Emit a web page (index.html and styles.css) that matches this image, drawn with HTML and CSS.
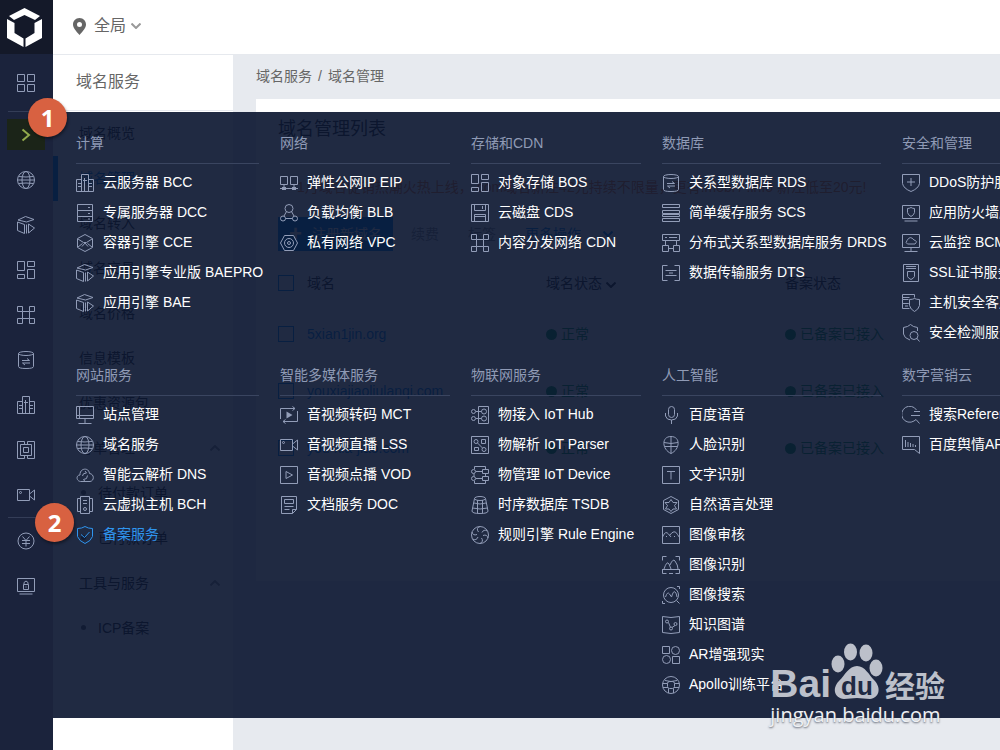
FILE: index.html
```html
<!DOCTYPE html>
<html lang="zh-CN">
<head>
    <meta charset="UTF-8">
    <meta name="viewport" content="width=device-width, initial-scale=1.0">
    <title>域名管理</title>
    <link rel="stylesheet" href="styles.css">
</head>
<body>
    <!-- icon sprite, 18x18 grid -->
    <svg class="sprite" aria-hidden="true">
        <symbol id="grid" viewBox="0 0 18 18"><path d="M.5.5h7v7h-7zM10.5.5h7v7h-7zM.5 10.5h7v7h-7zM10.5 10.5h7v7h-7z"/></symbol>
        <symbol id="globe" viewBox="0 0 18 18"><circle cx="9" cy="9" r="8.5"/><ellipse cx="9" cy="9" rx="4" ry="8.5"/><path d="M1.5 5.5q7.500 1 15 0M1.500 12.500q7.500-1 15 0M.5 9h17"/></symbol>
        <symbol id="box" viewBox="0 0 18 18"><path d="M1 4L8.500.5 17 3.500 9.500 6zM.5 6L7.500 8.500v9L.5 14.500zM9.500 8.500v9M11.500 8l6 4-6 5z"/></symbol>
        <symbol id="bos" viewBox="0 0 18 18"><path d="M.5.5h7v9h-7zM10.500.5h7v5h-7zM.5 13.500h7v4h-7zM10.500 8.500h7v9h-7z"/></symbol>
        <symbol id="cdn" viewBox="0 0 18 18"><path d="M.5.5h5v5h-5zM12.500.5h5v5h-5zM.5 12.500h5v5h-5zM12.500 12.500h5v5h-5zM5.500 5.500h7v7h-7z"/></symbol>
        <symbol id="rds" viewBox="0 0 18 18"><ellipse cx="9" cy="2.500" rx="7.500" ry="2"/><path d="M1.500 2.500v13q0 2 7.500 2t7.500-2v-13M5 9.500h7.500l-2.500-2M13 12H5.500l2.500 2"/></symbol>
        <symbol id="bcc" viewBox="0 0 18 18"><path d="M5.500 17.500V.5h7v17M5.500 5.500h-5v12h17v-12h-5M8.500 4v13M2 9.500h3M2 12.500h3M7 6.500h4M13 9.500h3M13 12.500h3"/></symbol>
        <symbol id="chip" viewBox="0 0 18 18"><path d="M7.500 3.500v-3h-7v17h7v-3M10.500 3.500v-3h7v17h-7v-3M3.500 3.500h11v11h-11zM6.500 6.500h5v5h-5z"/></symbol>
        <symbol id="video" viewBox="0 0 18 18"><path d="M.5 3.500h12v11H.5zM12.500 8l5-4v10l-5-4"/><circle cx="3.500" cy="6.500" r="1"/></symbol>
        <symbol id="yuan" viewBox="0 0 18 18"><circle cx="9" cy="9" r="8"/><path d="M5.500 4.500L9 8.500l3.500-4M9 8.500v6M5 8.500h8M5 11.500h8"/></symbol>
        <symbol id="lock" viewBox="0 0 18 18"><path d="M.5 1.500h17v13H.5zM2.500 17h13M6.500 7.500h5v5h-5zM7 7.500v-2q2-3 4 0v2M9 9.500v1"/></symbol>
        <symbol id="dcc" viewBox="0 0 18 18"><path d="M1.500.5h15v17h-15zM1.500 6.500h15M1.500 12.500h15M12 3.500h2M12 9.500h2M12 15h2"/></symbol>
        <symbol id="cce" viewBox="0 0 18 18"><path d="M9 .5l7.500 4v9L9 17.500l-7.500-4v-9zM2 5l5.500 3.500h3L16 5M2 13l4.500-3.500M16 13l-4.500-3.500M6 12.500L9 9l3 3.500"/></symbol>
        <symbol id="eip" viewBox="0 0 18 18"><path d="M.5 2.500h7v8h-7zM10.500 2.500h7v8h-7zM4 10.500v4M14 10.500v4M0 14.500h18"/><path class="solid" d="M2 13h4v3H2zM12 13h4v3h-4z"/></symbol>
        <symbol id="blb" viewBox="0 0 18 18"><circle cx="9" cy="4.500" r="4"/><circle cx="3" cy="14.500" r="2.500"/><circle cx="15" cy="14.500" r="2.500"/><path d="M6.500 7.500L4 12M11.500 7.500L14 12M5.500 14.500h7"/></symbol>
        <symbol id="vpc" viewBox="0 0 18 18"><path d="M4.500 1.500h9l4 7.500-4 7.500h-9L.5 9z"/><circle cx="9" cy="9" r="4.500"/><circle cx="9" cy="9" r="1.500"/></symbol>
        <symbol id="disk" viewBox="0 0 18 18"><path d="M.5.5h17v17H.5zM3.500.5v6h11v-6M3.500 17.500v-7h11v7M11.500 2v3M4 12.500h10"/></symbol>
        <symbol id="scs" viewBox="0 0 18 18"><path d="M.5.5h17v3H.5zM.5 6.500h17v3H.5zM.5 10.500h17v2H.5zM.5 14.500h17v3H.5z"/></symbol>
        <symbol id="drds" viewBox="0 0 18 18"><path d="M.5.5h17v6H.5zM.5 11.500h6v6h-6zM11.500 11.500h6v6h-6zM3.500 11.500v-5M14.500 11.500v-5M3 3.500h2M7 3.500h8M6.500 14.500h5"/></symbol>
        <symbol id="dts" viewBox="0 0 18 18"><path d="M5.500 1.500h-5v15h5M12.500 1.500h5v15h-5M3.500 6.500h11M3.500 11.500h11M7 9h4"/></symbol>
        <symbol id="ddos" viewBox="0 0 18 18"><path d="M.5.500h17v9q-1 5-8.500 8-7.500-3-8.500-8zM9 4v8M5 8h8"/></symbol>
        <symbol id="waf" viewBox="0 0 18 18"><path d="M.5 1.500h17v13H.5zM2.500 17h13M5.500 4.500q2 0 3.500-1 1.500 1 3.500 1v4Q12 11 9 12.500 6 11 5.500 8.500z"/></symbol>
        <symbol id="bcm" viewBox="0 0 18 18"><path d="M.5.5h17v13H.5zM2.500 17.500h13M9 13.500v4M5.500 10q-2.500-1-.5-3.500 3-5.500 7-.5 4 1 1 4z"/></symbol>
        <symbol id="ssl" viewBox="0 0 18 18"><path d="M1.500.5h15v17h-15zM4 2.500h10M4 4.500h10M5.500 7.500h7v5q-1 2-3.500 3-2.500-1-3.500-3z"/></symbol>
        <symbol id="host" viewBox="0 0 18 18"><path d="M7.500 14.500h-7v-5h6M6.500 9.500h-6v-4h6M.5 5.500v-5h12v3M.5 3.500h7M3 12h3M7.500 5.500q3 0 5-1 2 1 5 1v6q-1 4-5 6-4-2-5-6z"/></symbol>
        <symbol id="scan" viewBox="0 0 18 18"><path d="M8 16q-6-2-6.500-6V3.500Q6 3 8.500.5 11 3 15.500 3.500V7"/><circle cx="12" cy="11.500" r="4"/><path d="M14.500 14l3 3.500"/></symbol>
        <symbol id="site" viewBox="0 0 18 18"><path d="M.5.5h17v12H.5zM3.500.5v12M.5 9.500h17M9 12.500v5M2.500 17.500h13"/></symbol>
        <symbol id="dns" viewBox="0 0 18 18"><path d="M4.500 15.500C0 15 0 9 4 9 3.500 2 13 1 13.500 7.500c5 .5 5 7.500.5 8zM6.500 10q0-3 4-3l-1.500-2M11.500 9.500q0 4-4 4l1.500 2"/></symbol>
        <symbol id="bch" viewBox="0 0 18 18"><path d="M4.500.5h9v17h-9zM4.500 2.500h-3v13h3M13.500 2.500h3v13h-3M7 4.500h4M7 7.500h4"/><circle cx="9" cy="13" r="1.500"/></symbol>
        <symbol id="icp" viewBox="0 0 18 18"><path d="M9 .5q3 2 7.500 2v8Q15 15 9 17.500 3 15 1.500 10.500v-8q4.500 0 7.500-2zM5 8.500l3.500 3 5-5.500"/></symbol>
        <symbol id="mct" viewBox="0 0 18 18"><path d="M.5 13V2.500H15M12.500.5L15 2.500l-2.500 2M17.500 5v10.500H3M5.500 13.500L3 15.500l2.500 2"/><path class="solid" d="M6.500 5.500l6 3.500-6 3.500z"/></symbol>
        <symbol id="vod" viewBox="0 0 18 18"><path d="M.5.5h17v17H.5zM6 5.500L12.500 9 6 12.500z"/></symbol>
        <symbol id="doc" viewBox="0 0 18 18"><path d="M12.500 17.500h-11V.5h15v13zM12.500 17.500v-4h4M4.500 3.500h9v4h-9zM4.500 10.500h9M4.500 13.500h5"/></symbol>
        <symbol id="hub" viewBox="0 0 18 18"><path d="M7.500.5h10v17h-10zM5 5.500h5.500M5 12.500h5.500"/><circle cx="2.500" cy="5.500" r="2"/><circle cx="2.500" cy="12.500" r="2"/><circle cx="13" cy="5.500" r="2.500"/><circle cx="13" cy="12.500" r="2.500"/></symbol>
        <symbol id="parser" viewBox="0 0 18 18"><path d="M.5.5h17v17H.5zM10.500 3.500h4v4h-4zM3.500 11.500h4v3h-4zM6.500 7l5 5"/><circle cx="5" cy="5.500" r="2"/><circle cx="13" cy="13.500" r="2"/></symbol>
        <symbol id="device" viewBox="0 0 18 18"><path d="M3.500 3V.5h11v3M3.500 15v2.500h11v-3M11.500 3.500h6v4h-6zM11.500 10.500h6v4h-6zM5 5.500h6.500M5 12.500h6.500M3 7.500v3M14.500 7.500v3"/><circle cx="2.500" cy="5.500" r="2"/><circle cx="2.500" cy="12.500" r="2"/></symbol>
        <symbol id="tsdb" viewBox="0 0 18 18"><ellipse cx="9" cy="2.500" rx="5.500" ry="2"/><path d="M3.500 2.500L1 15q0 2.500 8 2.500t8-2.500L14.500 2.500M3 7q6 2 12 0M1.500 12q7.500 2 15 0M6.500 4v13M11.500 4v13"/></symbol>
        <symbol id="rule" viewBox="0 0 18 18"><circle cx="9" cy="9" r="8.500"/><path d="M9 .5Q4.500 2 7.500 6M16.500 5q-4-2-5.500 1.500M17 12q-1-4-5-2.500M9 17.500q4-2 1.500-5.500M1.500 13q4 2 5.500-2M1 6q1 4 5 2.500"/></symbol>
        <symbol id="mic" viewBox="0 0 18 18"><rect x="6.500" y=".5" width="6" height="11" rx="3"/><path d="M3.500 7v3q1 4 6 4t6-4V7M9.500 14v4"/></symbol>
        <symbol id="face" viewBox="0 0 18 18"><path d="M9 .5c10 0 9 13 0 17C0 13.500-1 .5 9 .5zM9 .5v17M2 6.500q7 2 14 0M2.500 10.500h13"/></symbol>
        <symbol id="ocr" viewBox="0 0 18 18"><path d="M.5.5h17v17H.5zM5 5.500h8M9 5.500v8"/></symbol>
        <symbol id="nlp" viewBox="0 0 18 18"><path d="M9 .5l7.500 4v9L9 17.500l-7.500-4v-9zM9 3.500l2 3h4L12.500 9.500l2 3.500H11L9 15.500 7 13H3.500l2-3.500L3 6.500h4z"/></symbol>
        <symbol id="audit" viewBox="0 0 18 18"><path d="M.5.500h17v17H.5zM.5 11q3-7 6-3l2.500 3M7.500 9.500q5-7 8-1l2 3"/><path d="M4 10.500h1M12 10.500h1"/></symbol>
        <symbol id="detect" viewBox="0 0 18 18"><path d="M4.500.5h-4v4M13.500.5h4v4M.5 14v3.500h4M17.500 14v3.500h-4M0 13.500h18M2 13q3-9 5-5l2 5M8 9q3-7 5-4 3 4 3 8M7 17.500h4"/></symbol>
        <symbol id="search" viewBox="0 0 18 18"><circle cx="9" cy="9" r="7.500"/><path d="M14.500 14.500l3 3M3.500 11q2-6 4-3t2 3q2-7 3.500-5 1.500 1 2 5M15 .5h2.500V3M3 17.500H.5V15"/></symbol>
        <symbol id="graph" viewBox="0 0 18 18"><path d="M.5.5q8.500 2 17 0v16q-8.500 2-17 0zM6.500 6.500l2 5M10 11.500l3-2"/><circle cx="5" cy="5.500" r="1.500"/><circle cx="9" cy="12.500" r="1.500"/><circle cx="13.500" cy="8" r="1.500"/></symbol>
        <symbol id="ar" viewBox="0 0 18 18"><path d="M.5.5h7v7h-7zM10.500 10.500h7v7h-7z"/><circle cx="13.500" cy="4.500" r="4"/><circle cx="4.500" cy="13.500" r="4"/></symbol>
        <symbol id="apollo" viewBox="0 0 18 18"><circle cx="9" cy="9" r="8.500"/><rect x="5.500" y="5.500" width="7" height="7" rx="2"/><path d="M3 4.500q6 2 12 0M.5 7.500h5M12.500 7.500h5M1 11.500h5M12 11.500h5M6.500 12.500v4.500M11.500 12.500v4.500"/></symbol>
        <symbol id="refer" viewBox="0 0 18 18"><path d="M14.500 4A8 8 0 1 0 12 15l2-1.500 3.500 4M12 5.500h6M9 9.500h9"/></symbol>
        <symbol id="opinion" viewBox="0 0 18 18"><path d="M.5.500h17v17l-5-4H.5zM3.500 4v7M6 6v5M8.500 7v4M11 8v3M13.500 9v2"/></symbol>
        <symbol id="up" viewBox="0 0 10 6"><path d="M.5 5.500L5 1l4.500 4.500"/></symbol>
        <symbol id="down" viewBox="0 0 10 6"><path d="M.5.5L5 5 9.500.5"/></symbol>
    </svg>

    <div class="app">
        <aside class="rail">
            <a class="logo" href="#" aria-label="首页">
                <svg viewBox="0 0 35 39"><path d="M17.500 0L33 8l-5 4-10.500-5L7 12 2 8zM0 11l7.500 4v10l9 5.500V39L0 30zM35 11l-7.500 4v10l-9 5.500V39L35 30z"/></svg>
            </a>
            <nav class="rail-nav">
                <a href="#" aria-label="总览"><svg class="icon"><use href="#grid"/></svg></a>
                <hr class="first">
                <a href="#" class="expand" aria-label="展开"><span><svg viewBox="0 0 10 14"><path d="M1.500 1.500L8 7l-6.500 5.500"/></svg></span></a>
                <a href="#" aria-label="域名"><svg class="icon"><use href="#globe"/></svg></a>
                <a href="#" aria-label="应用引擎"><svg class="icon"><use href="#box"/></svg></a>
                <a href="#" aria-label="对象存储"><svg class="icon"><use href="#bos"/></svg></a>
                <a href="#" aria-label="内容分发"><svg class="icon"><use href="#cdn"/></svg></a>
                <a href="#" aria-label="数据库"><svg class="icon"><use href="#rds"/></svg></a>
                <a href="#" aria-label="云服务器"><svg class="icon"><use href="#bcc"/></svg></a>
                <a href="#" aria-label="计算"><svg class="icon"><use href="#chip"/></svg></a>
                <a href="#" aria-label="直播"><svg class="icon"><use href="#video"/></svg></a>
                <hr>
                <a href="#" aria-label="财务"><svg class="icon"><use href="#yuan"/></svg></a>
                <a href="#" aria-label="安全"><svg class="icon"><use href="#lock"/></svg></a>
            </nav>
        </aside>

        <div class="page">
            <header class="topbar">
                <svg class="pin" viewBox="0 0 13 17"><path fill-rule="evenodd" d="M6.500 0C2.500 0 0 3 0 6.500 0 10 3 13 6.500 17 10 13 13 10 13 6.500 13 3 10.500 0 6.500 0zm0 4a2.500 2.500 0 1 1 0 5 2.500 2.500 0 0 1 0-5z"/></svg>
                <button type="button" class="region">全局 <svg class="chev"><use href="#down"/></svg></button>
            </header>
            <div class="body">
                <aside class="side">
                    <h2>域名服务</h2>
                    <nav>
                        <a href="#">域名概览</a>
                        <a href="#" class="active">域名管理</a>
                        <a href="#">域名转入</a>
                        <a href="#">域名交易</a>
                        <a href="#">域名价格</a>
                        <a href="#">信息模板</a>
                        <a href="#">优惠资源包</a>
                        <a href="#">订单管理<svg class="chev"><use href="#up"/></svg></a>
                        <a href="#" class="sub">待付款订单</a>
                        <a href="#" class="sub">已付款订单</a>
                        <a href="#">工具与服务<svg class="chev"><use href="#up"/></svg></a>
                        <a href="#" class="sub">ICP备案</a>
                    </nav>
                </aside>
                <main class="content">
                    <div class="crumbs"><a href="#">域名服务</a><span>/</span><a href="#">域名管理</a></div>
                    <section class="card">
                        <h1>域名管理列表</h1>
                        <p class="promo">1月域名促销热潮火热上线，.com域名新注42元持续不限量，更有.mobi / .info 新注低至20元!</p>
                        <div class="tools">
                            <button type="button" class="primary"><b>+</b>注册新域名</button>
                            <button type="button">续费</button>
                            <button type="button">标签</button>
                            <button type="button" class="more">更多操作 <svg class="chev"><use href="#down"/></svg></button>
                        </div>
                        <table>
                            <thead>
                                <tr><th class="tick"><input type="checkbox" aria-label="全选"></th><th>域名</th><th>域名状态 <svg class="chev"><use href="#down"/></svg></th><th class="last">备案状态</th></tr>
                            </thead>
                            <tbody>
                                <tr><td class="tick"><input type="checkbox" aria-label="5xian1jin.org"></td><td><a href="#">5xian1jin.org</a></td><td class="ok">正常</td><td class="ok">已备案已接入</td></tr>
                                <tr><td class="tick"><input type="checkbox" aria-label="youxiajiaoliulanqi.com"></td><td><a href="#">youxiajiaoliulanqi.com</a></td><td class="ok">正常</td><td class="ok">已备案已接入</td></tr>
                                <tr><td class="tick"><input type="checkbox" aria-label="you-xia-jiao.com"></td><td><a href="#">you-xia-jiao.com</a></td><td class="ok">正常</td><td class="ok">已备案已接入</td></tr>
                            </tbody>
                        </table>
                    </section>
                </main>
            </div>
        </div>

        <!-- product menu over the page -->
        <div class="menu">
            <section>
                <h3>计算</h3>
                <ul>
                    <li><a href="#"><svg class="icon"><use href="#bcc"/></svg>云服务器 BCC</a></li>
                    <li><a href="#"><svg class="icon"><use href="#dcc"/></svg>专属服务器 DCC</a></li>
                    <li><a href="#"><svg class="icon"><use href="#cce"/></svg>容器引擎 CCE</a></li>
                    <li><a href="#"><svg class="icon"><use href="#box"/></svg>应用引擎专业版 BAEPRO</a></li>
                    <li><a href="#"><svg class="icon"><use href="#box"/></svg>应用引擎 BAE</a></li>
                </ul>
            </section>
            <section>
                <h3>网络</h3>
                <ul>
                    <li><a href="#"><svg class="icon"><use href="#eip"/></svg>弹性公网IP EIP</a></li>
                    <li><a href="#"><svg class="icon"><use href="#blb"/></svg>负载均衡 BLB</a></li>
                    <li><a href="#"><svg class="icon"><use href="#vpc"/></svg>私有网络 VPC</a></li>
                </ul>
            </section>
            <section>
                <h3>存储和CDN</h3>
                <ul>
                    <li><a href="#"><svg class="icon"><use href="#bos"/></svg>对象存储 BOS</a></li>
                    <li><a href="#"><svg class="icon"><use href="#disk"/></svg>云磁盘 CDS</a></li>
                    <li><a href="#"><svg class="icon"><use href="#cdn"/></svg>内容分发网络 CDN</a></li>
                </ul>
            </section>
            <section>
                <h3>数据库</h3>
                <ul>
                    <li><a href="#"><svg class="icon"><use href="#rds"/></svg>关系型数据库 RDS</a></li>
                    <li><a href="#"><svg class="icon"><use href="#scs"/></svg>简单缓存服务 SCS</a></li>
                    <li><a href="#"><svg class="icon"><use href="#drds"/></svg>分布式关系型数据库服务 DRDS</a></li>
                    <li><a href="#"><svg class="icon"><use href="#dts"/></svg>数据传输服务 DTS</a></li>
                </ul>
            </section>
            <section>
                <h3>安全和管理</h3>
                <ul>
                    <li><a href="#"><svg class="icon"><use href="#ddos"/></svg>DDoS防护服务</a></li>
                    <li><a href="#"><svg class="icon"><use href="#waf"/></svg>应用防火墙服务</a></li>
                    <li><a href="#"><svg class="icon"><use href="#bcm"/></svg>云监控 BCM</a></li>
                    <li><a href="#"><svg class="icon"><use href="#ssl"/></svg>SSL证书服务</a></li>
                    <li><a href="#"><svg class="icon"><use href="#host"/></svg>主机安全客户端</a></li>
                    <li><a href="#"><svg class="icon"><use href="#scan"/></svg>安全检测服务</a></li>
                </ul>
            </section>
            <section>
                <h3>网站服务</h3>
                <ul>
                    <li><a href="#"><svg class="icon"><use href="#site"/></svg>站点管理</a></li>
                    <li><a href="#"><svg class="icon"><use href="#globe"/></svg>域名服务</a></li>
                    <li><a href="#"><svg class="icon"><use href="#dns"/></svg>智能云解析 DNS</a></li>
                    <li><a href="#"><svg class="icon"><use href="#bch"/></svg>云虚拟主机 BCH</a></li>
                    <li><a href="#" class="current"><svg class="icon"><use href="#icp"/></svg>备案服务</a></li>
                </ul>
            </section>
            <section>
                <h3>智能多媒体服务</h3>
                <ul>
                    <li><a href="#"><svg class="icon"><use href="#mct"/></svg>音视频转码 MCT</a></li>
                    <li><a href="#"><svg class="icon"><use href="#video"/></svg>音视频直播 LSS</a></li>
                    <li><a href="#"><svg class="icon"><use href="#vod"/></svg>音视频点播 VOD</a></li>
                    <li><a href="#"><svg class="icon"><use href="#doc"/></svg>文档服务 DOC</a></li>
                </ul>
            </section>
            <section>
                <h3>物联网服务</h3>
                <ul>
                    <li><a href="#"><svg class="icon"><use href="#hub"/></svg>物接入 IoT Hub</a></li>
                    <li><a href="#"><svg class="icon"><use href="#parser"/></svg>物解析 IoT Parser</a></li>
                    <li><a href="#"><svg class="icon"><use href="#device"/></svg>物管理 IoT Device</a></li>
                    <li><a href="#"><svg class="icon"><use href="#tsdb"/></svg>时序数据库 TSDB</a></li>
                    <li><a href="#"><svg class="icon"><use href="#rule"/></svg>规则引擎 Rule Engine</a></li>
                </ul>
            </section>
            <section>
                <h3>人工智能</h3>
                <ul>
                    <li><a href="#"><svg class="icon"><use href="#mic"/></svg>百度语音</a></li>
                    <li><a href="#"><svg class="icon"><use href="#face"/></svg>人脸识别</a></li>
                    <li><a href="#"><svg class="icon"><use href="#ocr"/></svg>文字识别</a></li>
                    <li><a href="#"><svg class="icon"><use href="#nlp"/></svg>自然语言处理</a></li>
                    <li><a href="#"><svg class="icon"><use href="#audit"/></svg>图像审核</a></li>
                    <li><a href="#"><svg class="icon"><use href="#detect"/></svg>图像识别</a></li>
                    <li><a href="#"><svg class="icon"><use href="#search"/></svg>图像搜索</a></li>
                    <li><a href="#"><svg class="icon"><use href="#graph"/></svg>知识图谱</a></li>
                    <li><a href="#"><svg class="icon"><use href="#ar"/></svg>AR增强现实</a></li>
                    <li><a href="#"><svg class="icon"><use href="#apollo"/></svg>Apollo训练平台</a></li>
                </ul>
            </section>
            <section>
                <h3>数字营销云</h3>
                <ul>
                    <li><a href="#"><svg class="icon"><use href="#refer"/></svg>搜索Referer</a></li>
                    <li><a href="#"><svg class="icon"><use href="#opinion"/></svg>百度舆情API</a></li>
                </ul>
            </section>
        </div>

        <span class="step step-one">1</span>
        <span class="step step-two">2</span>

        <div class="mark">
            <div class="mark-name">
                <span>Bai</span>
                <span class="paw">
                    <svg viewBox="0 0 52 56"><ellipse cx="7" cy="21" rx="6.500" ry="8.500"/><ellipse cx="19.500" cy="9" rx="6.500" ry="8.500"/><ellipse cx="35" cy="10" rx="6.500" ry="8.500"/><ellipse cx="45" cy="25" rx="6.500" ry="8.500"/><path d="M26 23c8 0 12 9 17 14 8 8 5 18-4 19-5 0-8-1-13-1s-8 1-13 1C3 55 1 45 8 38c6-6 10-15 18-15z"/></svg>
                    <b>du</b>
                </span>
                <span class="cn">经验</span>
            </div>
            <div class="mark-url">jingyan.baidu.com</div>
        </div>
    </div>
</body>
</html>
```
FILE: styles.css
```css
* { box-sizing: border-box; }
body { margin: 0; overflow: hidden; background: #e7eaef; color: #333; font: 14px/20px "Liberation Sans", "Noto Sans CJK SC", sans-serif; }
a { color: inherit; text-decoration: none; }
h1, h2, h3, p, ul { margin: 0; padding: 0; font-weight: normal; }
ul { list-style: none; }
button { padding: 0; border: 0; background: none; font: inherit; color: inherit; }
svg { flex: none; fill: none; stroke: currentColor; }
.sprite { position: absolute; width: 0; height: 0; }
.icon { width: 18px; height: 18px; color: #929db8; }
.solid { fill: currentColor; stroke: none; }
.chev { width: 10px; height: 6px; overflow: visible; stroke-width: 2; }

.app { position: relative; display: flex; min-height: 100vh; }

/* left rail */
.rail { width: 53px; flex: none; background: #1b233c; }
.logo { display: flex; align-items: center; height: 54px; padding-left: 7px; background: #141929; }
.logo svg { width: 35px; height: 39px; fill: #fff; stroke: none; }
.rail-nav { padding: 6px 1px 0 0; }
.rail-nav a { display: flex; align-items: center; justify-content: center; height: 45px; }
.rail-nav hr { height: 1px; margin: 0 7px 0 8px; border: 0; background: #343d57; }
.rail-nav .first { margin-top: 6px; }
.expand span { display: flex; align-items: center; justify-content: center; width: 38px; height: 31px; background: #1b2418; }
.expand svg { width: 10px; height: 14px; color: #93ab4d; stroke-width: 2; }

/* page */
.page { flex: 1; min-width: 0; display: flex; flex-direction: column; }
.topbar { display: flex; align-items: center; gap: 8px; height: 55px; padding: 0 0 2px 20px; background: #fff; border-bottom: 1px solid #e6e9ee; }
.pin { width: 13px; height: 17px; fill: #666; stroke: none; }
.region { display: flex; align-items: center; gap: 5px; color: #666; font-size: 16px; }
.region .chev { color: #999; }
.body { flex: 1; display: flex; }
.side { width: 180px; flex: none; background: #fff; }
.side h2 { height: 56px; padding-left: 23px; border-bottom: 1px solid #e6e9ee; color: #666; font-size: 16px; line-height: 54px; }
.side a { display: flex; align-items: center; justify-content: space-between; height: 45px; padding: 0 13px 2px 26px; }
.side .chev { color: #999; }
.side .active { padding-left: 21px; border-left: 5px solid #108cee; color: #108cee; }
.side .sub { justify-content: flex-start; gap: 12px; padding-left: 28px; }
.side .sub::before { content: ""; width: 5px; height: 5px; border-radius: 50%; background: #666; }
.content { flex: 1; min-width: 0; padding-left: 23px; }
.crumbs { display: flex; gap: 6px; padding: 11px 0 13px; color: #666; }
.card { height: 482px; padding: 18px 0 0 22px; background: #fff; }
h1 { font-size: 18px; line-height: 24px; }
.promo { padding: 36px 0 0 19px; color: #f08040; white-space: nowrap; }
.tools { display: flex; align-items: center; margin-top: 20px; color: #999; }
.tools button { height: 34px; margin-right: 29px; }
.tools .primary { display: flex; align-items: center; justify-content: center; gap: 10px; width: 115px; margin-right: 18px; background: #108cee; color: #fff; }
.primary b { font-size: 22px; }
.tools .more { display: flex; align-items: center; gap: 22px; color: #108cee; }
table { width: 100%; margin-top: 10px; border-collapse: collapse; table-layout: fixed; text-align: left; }
th, td { width: 239px; height: 57px; padding: 0; font-weight: normal; }
th { height: 46px; padding-bottom: 2px; }
td { padding-bottom: 4px; }
.last { width: auto; }
.tick { width: 29px; }
.tick input { appearance: none; display: block; width: 16px; height: 16px; margin: 0; border: 1px solid #108cee; }
td a { color: #108cee; }
.ok { color: #1b9e5a; }
.ok::before { content: ""; display: inline-block; width: 11px; height: 11px; margin-right: 4px; border-radius: 50%; background: #1b9e5a; vertical-align: -1px; }

/* product menu */
.menu { position: absolute; top: 112px; left: 53px; right: 0; display: grid; grid-template-columns: 183px 170px 170px 219px minmax(76px, 1fr); gap: 12px 21px; padding: 16px 0 18px 23px; overflow: hidden; background: rgba(8, 19, 46, .9); color: #fff; white-space: nowrap; }
.menu section { min-width: 0; }
.menu h3 { height: 36px; margin-bottom: 4px; border-bottom: 1px solid #3a4560; color: #8f9ab5; font-size: 14px; line-height: 30px; }
.menu li a { display: flex; align-items: center; gap: 9px; height: 30px; padding-bottom: 2px; }
.menu .icon { margin-top: 2px; }
.menu .current, .current .icon { color: #2f95ef; }

.step { position: absolute; display: flex; align-items: center; justify-content: center; width: 39px; height: 39px; border-radius: 50%; background: #d86141; box-shadow: 1px 2px 3px rgba(0, 0, 0, .4); color: #fff; font: bold 24px/1 "Open Sans", sans-serif; }
.step-one { top: 98px; left: 28px; }
.step-two { top: 503px; left: 35px; }

.mark { position: absolute; top: 643px; right: 55px; color: #bcc0ca; }
.mark-name { display: flex; align-items: flex-end; height: 58px; font: bold 39px/34px "Liberation Sans", sans-serif; }
.paw { position: relative; width: 52px; height: 58px; }
.paw svg { display: block; width: 52px; height: 56px; fill: currentColor; stroke: none; }
.paw b { position: absolute; left: 0; right: 0; bottom: 2px; color: #202a43; font-size: 26px; line-height: 26px; text-align: center; }
.mark .cn { margin-left: 2px; font: bold 30px/34px "Noto Sans CJK SC", sans-serif; }
.mark-url { color: #eef0f3; font: 20px/28px "Open Sans", sans-serif; text-shadow: 0 1px 2px rgba(60, 65, 80, .8); }
```
